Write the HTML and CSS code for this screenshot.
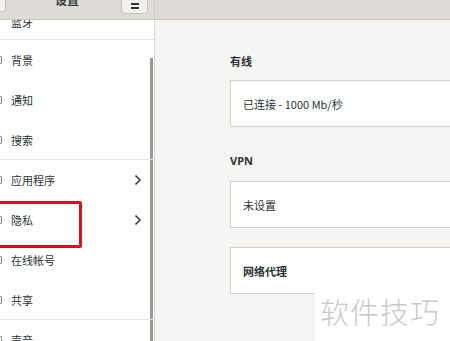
FILE: index.html
```html
<!DOCTYPE html>
<html lang="zh-CN">
<head>
    <meta charset="UTF-8">
    <title>设置</title>
    <link rel="stylesheet" href="styles.css">
</head>
<body>
    <div class="window">
        <header class="titlebar">
            <div class="title-left">
                <span class="search-btn"></span>
                <span class="title">设置</span>
                <span class="menu-btn"><i></i><i></i></span>
            </div>
            <div class="title-right"></div>
        </header>

        <div class="content">
            <aside class="sidebar">
                <div class="scrollbar"></div>
                <div class="row row-cut sep"><span>蓝牙</span></div>
                <div class="row"><i class="ic"></i>背景</div>
                <div class="row"><i class="ic"></i>通知</div>
                <div class="row sep"><i class="ic"></i>搜索</div>
                <div class="row"><i class="ic"></i>应用程序
                    <svg class="arrow" width="8" height="12" viewBox="0 0 8 12"><path d="M1.5 1.5 L6 6 L1.5 10.5" fill="none" stroke="#3b3f40" stroke-width="1.6"/></svg>
                </div>
                <div class="row highlight"><i class="ic"></i>隐私
                    <svg class="arrow" width="8" height="12" viewBox="0 0 8 12"><path d="M1.5 1.5 L6 6 L1.5 10.5" fill="none" stroke="#3b3f40" stroke-width="1.6"/></svg>
                </div>
                <div class="row"><i class="ic"></i>在线帐号</div>
                <div class="row sep"><i class="ic"></i>共享</div>
                <div class="row row-last"><i class="ic"></i>声音</div>
            </aside>

            <main class="panel">
                <h3 class="label">有线</h3>
                <div class="card">已连接 - 1000 Mb/秒</div>
                <h3 class="label vpn">VPN</h3>
                <div class="card">未设置</div>
                <div class="card bold">网络代理</div>
            </main>
        </div>

        <div class="watermark">软件技巧</div>
    </div>
</body>
</html>
```

FILE: styles.css
```css
* {
    margin: 0;
    padding: 0;
    box-sizing: border-box;
}

body {
    font-family: "Noto Sans CJK SC", "Noto Sans", sans-serif;
    background: #f6f5f4;
    color: #2e3436;
    width: 450px;
    height: 341px;
    overflow: hidden;
}

.window {
    position: relative;
    height: 341px;
    overflow: hidden;
}

.titlebar {
    display: flex;
    height: 20px;
    background: #dfdcd8;
    border-bottom: 1px solid #c8c4bf;
    overflow: hidden;
}

.title-left {
    width: 155px;
    display: flex;
    align-items: flex-start;
    border-right: 1px solid #cfcbc6;
}

.search-btn {
    width: 6px;
    height: 12px;
    background: #f3f2f1;
    border: 1px solid #c6c2bd;
    border-top: none;
    border-left: none;
    border-radius: 0 0 3px 0;
}

.title {
    font-size: 12px;
    font-weight: 700;
    line-height: 12px;
    margin-left: 49px;
    margin-top: -6px;
    color: #3a3d3e;
}

.menu-btn {
    margin-left: auto;
    margin-right: 6px;
    width: 27px;
    height: 14px;
    background: #f1f0ee;
    border: 1px solid #c6c2bd;
    border-top: none;
    border-radius: 0 0 4px 4px;
    display: flex;
    flex-direction: column;
    align-items: center;
    gap: 2px;
    padding-top: 3px;
}

.menu-btn i {
    width: 8px;
    height: 2px;
    background: #2e3436;
}

.title-right {
    flex: 1;
}

.content {
    display: flex;
    height: 321px;
}

.sidebar {
    width: 155px;
    background: #fff;
    border-right: 1px solid #d8d4d0;
    position: relative;
    overflow: hidden;
}

.scrollbar {
    position: absolute;
    right: 1px;
    top: 38px;
    width: 3px;
    height: 300px;
    background: #9a9896;
}

.row {
    display: flex;
    align-items: center;
    height: 40px;
    padding-left: 11px;
    padding-right: 12px;
    font-size: 11px;
    color: #2e3436;
    position: relative;
}

.row-cut {
    height: 20px;
    overflow: hidden;
    align-items: flex-start;
}

.row-cut span {
    line-height: 11px;
    margin-top: -3px;
}

.sep {
    border-bottom: 1px solid #e6e4e2;
}

.ic {
    position: absolute;
    left: -3px;
    width: 5px;
    height: 8px;
    border: 1px solid #8a8c8c;
    border-radius: 1px;
}

.arrow {
    margin-left: auto;
}

.highlight::after {
    content: "";
    position: absolute;
    left: -4px;
    top: 1px;
    width: 80px;
    height: 41px;
    border: 3px solid #d2121c;
    border-radius: 2px;
}

.panel {
    flex: 1;
    padding: 33px 0 0 75px;
}

.label {
    font-size: 11px;
    font-weight: 700;
    color: #2e3436;
    height: 27px;
}

.vpn {
    margin-top: 26px;
    font-family: "Noto Sans", sans-serif;
    height: 28px;
}

.card {
    background: #fff;
    border: 1px solid #d3d0cc;
    border-right: none;
    height: 47px;
    display: flex;
    align-items: center;
    padding-left: 12px;
    font-size: 11px;
    color: #2e3436;
    margin-bottom: 19px;
}

.bold {
    font-weight: 700;
}

.watermark {
    position: absolute;
    left: 315px;
    top: 293px;
    width: 135px;
    height: 48px;
    background: #fff;
    color: #c9c9c9;
    font-size: 29px;
    font-weight: 300;
    line-height: 30px;
    padding: 3px 0 0 5px;
    letter-spacing: 1px;
}
```
